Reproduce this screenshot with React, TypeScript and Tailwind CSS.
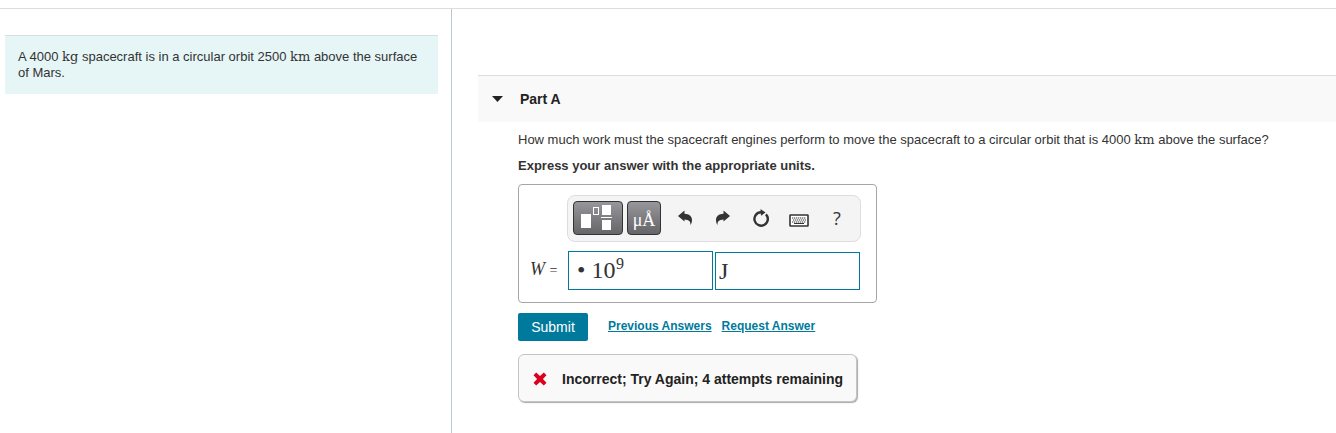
import React from "react";

const iconButton =
  "flex h-[34px] w-[38px] items-center justify-center text-[#333333]";

function Unit({ children }: { children: React.ReactNode }) {
  return (
    <span className="font-['DejaVu_Serif',serif] text-[13px] leading-4">
      {children}
    </span>
  );
}

function TemplatesIcon() {
  return (
    <svg width="34" height="26" viewBox="0 0 34 26" aria-hidden="true">
      <rect x="0" y="9" width="10" height="14" fill="#fff" />
      <rect x="12.5" y="2.5" width="5" height="7" fill="none" stroke="#fff" />
      <rect x="21" y="0" width="9" height="10" fill="#fff" />
      <rect x="20" y="12" width="11" height="1" fill="#fff" />
      <rect x="21" y="15" width="9" height="10" fill="#fff" />
    </svg>
  );
}

function ArrowIcon({ flip = false }: { flip?: boolean }) {
  return (
    <svg
      width="14"
      height="16"
      viewBox="0 0 14 16"
      aria-hidden="true"
      className={flip ? "-scale-x-100" : ""}
    >
      <path
        d="M0 6 6.500.500v3.200c4.600.300 7.500 2.500 7.500 6.300 0 2-.600 3.600-1.500 5 .2-3.400-1.400-5.500-6-5.600V11.500Z"
        fill="#333"
      />
    </svg>
  );
}

function ResetIcon() {
  return (
    <svg width="16" height="18" viewBox="0 0 16 18" aria-hidden="true">
      <path
        d="M9 3.300H8A6.700 6.700 0 1 0 12.900 5.300"
        fill="none"
        stroke="#333"
        strokeWidth="2.400"
      />
      <path d="M7.500 0 12.500 3.600 8 6.800Z" fill="#333" />
    </svg>
  );
}

function KeyboardIcon() {
  return (
    <svg width="20" height="13" viewBox="0 0 20 13" aria-hidden="true">
      <rect x="1" y="1" width="18" height="11" rx="0.500" fill="#fff" stroke="#333" strokeWidth="1.600" />
      <path
        d="M3 4h14M4 6h13M3 8h14"
        stroke="#333"
        strokeWidth="1.200"
        strokeDasharray="1.300 0.700"
      />
      <path d="M5 9.500h10" stroke="#333" />
    </svg>
  );
}

function IncorrectIcon() {
  return (
    <svg width="14" height="14" viewBox="0 0 14 14" aria-hidden="true">
      <path
        d="M3.200.5 7 4.100 10.800.5 13.500 3.200 9.900 7l3.600 3.800-2.700 2.700L7 9.900l-3.800 3.600L.5 10.800 4.100 7 .5 3.200Z"
        fill="#db0020"
      />
    </svg>
  );
}

function Toolbar() {
  return (
    <div className="flex h-[47px] items-start rounded-lg border border-[#dddddd] bg-[#f4f4f4] pt-[5px] pl-[5px]">
      <button
        type="button"
        aria-label="Templates"
        className="flex h-[34px] w-[50px] items-center justify-center rounded border border-[#333333] bg-linear-to-b from-[#96969c] to-[#666668]"
      >
        <TemplatesIcon />
      </button>
      <button
        type="button"
        aria-label="Symbols"
        className="ml-1 h-[34px] w-[34px] rounded border border-[#333333] bg-linear-to-b from-[#96969c] to-[#666668] pt-1 font-['Liberation_Serif',serif] text-lg leading-7 text-white"
      >
        μÅ
      </button>
      <div className="ml-[5px] flex">
        <button type="button" aria-label="Undo" className={iconButton}>
          <ArrowIcon />
        </button>
        <button type="button" aria-label="Redo" className={iconButton}>
          <ArrowIcon flip />
        </button>
        <button type="button" aria-label="Reset" className={iconButton}>
          <ResetIcon />
        </button>
        <button type="button" aria-label="Keyboard shortcuts" className={`${iconButton} pt-1`}>
          <KeyboardIcon />
        </button>
        <button
          type="button"
          aria-label="Help"
          className={`${iconButton} font-['Open_Sans',sans-serif] text-lg`}
        >
          ?
        </button>
      </div>
    </div>
  );
}

function AnswerBox() {
  return (
    <div className="mt-[10px] w-[359px] rounded border border-[#a6a6a6] pt-[10px] pr-[15px] pb-3 pl-[11px] font-['Liberation_Serif',serif]">
      <div className="ml-[37px]">
        <Toolbar />
      </div>
      <div className="mt-[9px] flex items-end">
        <label htmlFor="value" className="w-[38px] shrink-0 self-center pb-1 text-lg leading-6">
          <i>W</i> <span className="text-sm">=</span>
        </label>
        {/* mantissa and exponent share one bordered field */}
        <div className="flex h-[39px] w-[145px] border border-[#007a9c] pl-2">
          <input
            id="value"
            defaultValue="• 10"
            className="h-full w-[39px] text-2xl outline-none"
          />
          <input
            aria-label="Exponent"
            defaultValue="9"
            className="h-6 w-4 text-base outline-none"
          />
        </div>
        <input
          aria-label="Units"
          defaultValue="J"
          className="ml-[2px] h-[38px] w-[145px] border border-[#007a9c] px-[3px] text-2xl outline-none"
        />
      </div>
    </div>
  );
}

function PartA() {
  return (
    <section className="mt-[66px] ml-[26px]">
      <button
        type="button"
        aria-expanded="true"
        className="flex h-[47px] w-full items-center border-t border-[#dddddd] bg-[#f9f9f9] pl-[14px] text-sm font-bold text-[#222222]"
      >
        <svg width="11" height="6" viewBox="0 0 11 6" aria-hidden="true">
          <path d="M0 0h11L5.500 6Z" fill="#222" />
        </svg>
        <span className="ml-[17px]">Part A</span>
      </button>
      <div className="pl-10">
        <p className="mt-[10px] leading-4">
          How much work must the spacecraft engines perform to move the
          spacecraft to a circular orbit that is 4000 <Unit>km</Unit> above the
          surface?
        </p>
        <p className="mt-[10px] leading-4 font-bold">
          Express your answer with the appropriate units.
        </p>
        <AnswerBox />
        <div className="mt-[10px] flex items-center">
          <button
            type="button"
            className="h-7 w-[70px] rounded-xs bg-[#007a9c] text-sm text-white"
          >
            Submit
          </button>
          <div className="ml-5 flex gap-[10px] pb-[2px] text-xs font-bold text-[#007a9c]">
            <a href="#previous" className="underline">
              Previous Answers
            </a>
            <a href="#request" className="underline">
              Request Answer
            </a>
          </div>
        </div>
        <div
          role="status"
          className="mt-[13px] flex h-12 w-[339px] items-center rounded-md border border-[#c4c4c4] bg-[#f9f9f9] pt-[2px] pl-[14px] text-sm font-bold text-[#222222] shadow-[1px_1px_1px_#aaaaaa]"
        >
          <IncorrectIcon />
          <span className="ml-[15px] whitespace-nowrap">
            Incorrect; Try Again; 4 attempts remaining
          </span>
        </div>
      </div>
    </section>
  );
}

export default function App() {
  return (
    <div className="flex min-h-screen flex-col bg-white pt-2 font-['Liberation_Sans',Arial,sans-serif] text-[13px] text-[#333333]">
      <main className="flex grow border-t border-[#dddddd]">
        <aside className="w-[452px] shrink-0 border-r border-[#bcc6d4] pt-[26px] pr-[13px] pl-[5px]">
          <p className="border-t border-[#d5e0e0] bg-[#e6f6f6] px-[13px] py-[13px] leading-4">
            A 4000 <Unit>kg</Unit> spacecraft is in a circular orbit 2500{" "}
            <Unit>km</Unit> above the surface of Mars.
          </p>
        </aside>
        <div className="min-w-0 grow">
          <PartA />
        </div>
      </main>
    </div>
  );
}
